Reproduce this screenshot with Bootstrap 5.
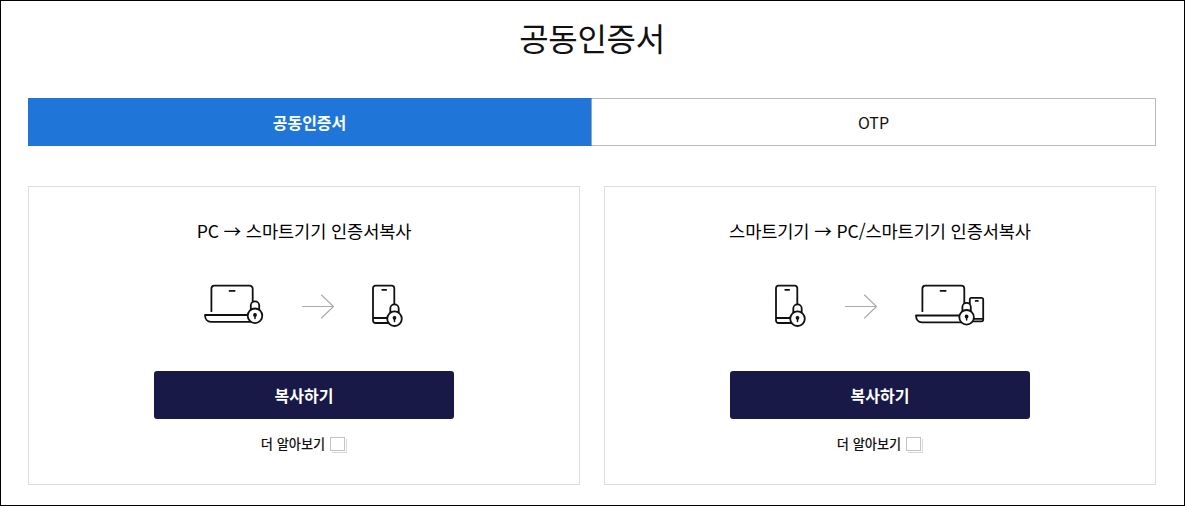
<!DOCTYPE html>
<html lang="ko">
<head>
    <meta charset="UTF-8">
    <meta name="viewport" content="width=device-width, initial-scale=1.0">
    <title>공동인증서</title>
    <link href="https://cdn.jsdelivr.net/npm/bootstrap@5.3.0/dist/css/bootstrap.min.css" rel="stylesheet">
    <style>
        body {
            font-family: "Noto Sans CJK KR", sans-serif;
            color: #111;
            background: #fff;
        }
        .page {
            height: 506px;
            border: 1px solid #000;
            padding: 12px 28px 0 27px;
        }
        .page-title {
            font-size: 32px;
            font-weight: 400;
            line-height: 48px;
            letter-spacing: -.3px;
            margin-bottom: 37px;
        }
        .cert-tabs {
            margin-bottom: 40px;
        }
        .cert-tabs .nav-link {
            height: 48px;
            padding: 0;
            border: 1px solid #bbb;
            border-left: 0;
            border-radius: 0;
            font-size: 16px;
            line-height: 46px;
            color: #111;
        }
        .cert-tabs .nav-link.active {
            border-color: #1f75d8;
            border-right-color: #8fa9c8;
            background: #1f75d8;
            color: #fff;
            font-weight: 700;
        }
        .copy-list {
            gap: 24px;
        }
        .copy-card {
            height: 299px;
            border: 1px solid #ddd;
            border-radius: 0;
            padding-top: 30px;
        }
        .copy-title {
            font-size: 17.6px;
            font-weight: 400;
            line-height: 28px;
            letter-spacing: -.12px;
            color: #000;
            margin-bottom: 39px;
        }
        .copy-icons {
            gap: 38px;
            margin-bottom: 43px;
        }
        .copy-icons svg {
            display: block;
            fill: none;
            stroke: #111;
            stroke-width: 1.8;
            stroke-linecap: round;
            stroke-linejoin: round;
        }
        .copy-icons svg.arrow {
            stroke: #aaa;
            stroke-width: 1.1;
        }
        .btn-copy {
            --bs-btn-color: #fff;
            --bs-btn-bg: #191948;
            --bs-btn-hover-color: #fff;
            --bs-btn-hover-bg: #26265c;
            width: 300px;
            height: 48px;
            padding: 0;
            border: 0;
            border-radius: 3px;
            font-size: 16px;
            font-weight: 700;
            line-height: 48px;
        }
        .more-link {
            margin-top: 15px;
            gap: 5px;
            font-size: 13.2px;
            font-weight: 500;
            line-height: 20px;
            color: #111;
        }
        .more-box {
            width: 15px;
            height: 14px;
            margin-right: 2px;
            border: 1px solid #c4c4c4;
            box-shadow: 1px 1px #fff, 2px 2px #d8d8d8;
        }
    </style>
</head>
<body>
    <svg width="0" height="0" class="d-none">
        <!-- padlock, centred on the body -->
        <symbol id="lock" overflow="visible">
            <path d="M-4.2 -6V-10.2a4.2 4.2 0 0 1 8.4 0V-6" fill="#fff"/>
            <circle r="7.3" fill="#fff"/>
            <circle cy="-.9" r="1.3" fill="#111" stroke-width="1.2"/>
            <path d="M0 0V2.8" stroke-width="1.5"/>
        </symbol>
    </svg>

    <div class="page">
        <h1 class="page-title text-center">공동인증서</h1>

        <ul class="cert-tabs nav nav-justified">
            <li class="nav-item"><a class="nav-link active" href="#">공동인증서</a></li>
            <li class="nav-item"><a class="nav-link" href="#">OTP</a></li>
        </ul>

        <div class="copy-list d-flex">
            <div class="copy-card card flex-fill w-50 align-items-center">
                <h2 class="copy-title">PC → 스마트기기 인증서복사</h2>
                <div class="copy-icons d-flex">
                    <svg width="60" height="44">
                        <path d="M7.4 27.2V4.7a3 3 0 0 1 3-3h35.3a3 3 0 0 1 3 3V18M25.5 6.8h5.2M47 31H1c0 4 2.4 6.8 6 6.8h40"/>
                        <use href="#lock" x="51" y="31.8"/>
                    </svg>
                    <svg class="arrow" width="32" height="44">
                        <path d="M0 22.5h31.5M19.5 11l12 11.5-12 11.5"/>
                    </svg>
                    <svg width="32" height="44">
                        <path d="M22.3 24V4.2a2.5 2.5 0 0 0-2.5-2.5H3.5A2.5 2.5 0 0 0 1 4.2v32.3A2.5 2.5 0 0 0 3.5 39H20M1 34h15M10.2 5.8h4"/>
                        <use href="#lock" x="22.5" y="34.7"/>
                    </svg>
                </div>
                <button type="button" class="btn btn-copy">복사하기</button>
                <a href="#" class="more-link d-flex align-items-center text-decoration-none">더 알아보기<span class="more-box"></span></a>
            </div>

            <div class="copy-card card flex-fill w-50 align-items-center">
                <h2 class="copy-title">스마트기기 → PC/스마트기기 인증서복사</h2>
                <div class="copy-icons d-flex">
                    <svg width="32" height="44">
                        <path d="M22.3 24V4.2a2.5 2.5 0 0 0-2.5-2.5H3.5A2.5 2.5 0 0 0 1 4.2v32.3A2.5 2.5 0 0 0 3.5 39H20M1 34h15M10.2 5.8h4"/>
                        <use href="#lock" x="22.5" y="34.7"/>
                    </svg>
                    <svg class="arrow" width="32" height="44">
                        <path d="M0 22.5h31.5M19.5 11l12 11.5-12 11.5"/>
                    </svg>
                    <svg width="70" height="44">
                        <path d="M7.4 27.2V4.7a3 3 0 0 1 3-3h35.9a3 3 0 0 1 3 3V20M25.5 6.8h5.2M47 31.5H1c0 4 2.4 6.8 6 6.8h40"/>
                        <path d="M54.8 24V15.5a1.6 1.6 0 0 1 1.6-1.6h10.2a1.6 1.6 0 0 1 1.6 1.6v20.2a1.6 1.6 0 0 1-1.6 1.6H56M59 34.8h9M60.7 16.9h2.2"/>
                        <use href="#lock" x="51.6" y="33.3"/>
                    </svg>
                </div>
                <button type="button" class="btn btn-copy">복사하기</button>
                <a href="#" class="more-link d-flex align-items-center text-decoration-none">더 알아보기<span class="more-box"></span></a>
            </div>
        </div>
    </div>

    <script src="https://cdn.jsdelivr.net/npm/bootstrap@5.3.0/dist/js/bootstrap.bundle.min.js"></script>
</body>
</html>
